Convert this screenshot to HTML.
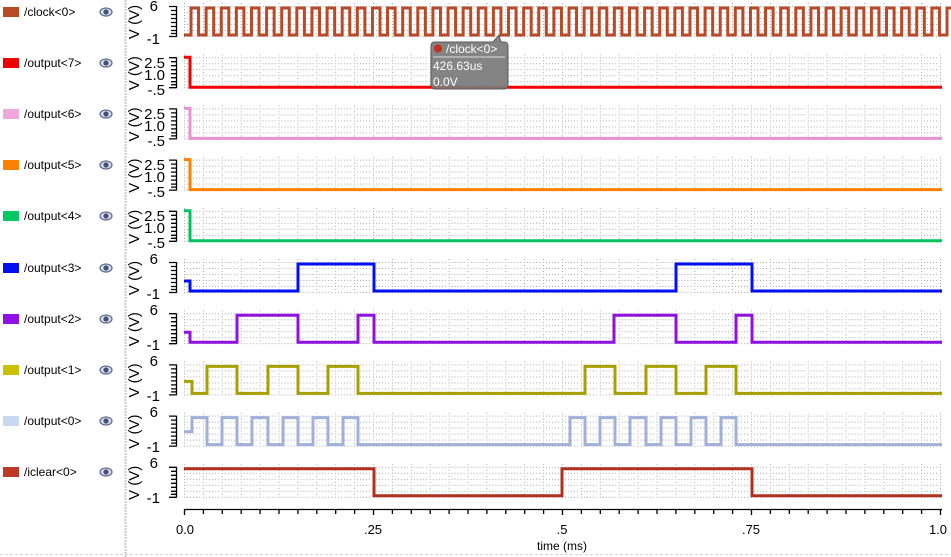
<!DOCTYPE html>
<html><head><meta charset="utf-8"><style>
html,body{margin:0;padding:0;background:#fff;width:951px;height:557px;overflow:hidden}
svg{display:block;font-family:"Liberation Sans",sans-serif}
</style></head><body>
<svg width="951" height="557" viewBox="0 0 951 557" xmlns="http://www.w3.org/2000/svg">
<defs>
<pattern id="gp" x="184" y="6" width="18.9" height="6" patternUnits="userSpaceOnUse">
<rect x="0" y="0" width="1" height="1" fill="#9aa89a"/><rect x="0" y="3" width="1" height="1" fill="#9aa89a"/>
<rect x="3" y="0" width="1" height="1" fill="#a8a8a8"/><rect x="6" y="0" width="1" height="1" fill="#a8a8a8"/>
<rect x="9" y="0" width="1" height="1" fill="#a8a8a8"/><rect x="12" y="0" width="1" height="1" fill="#a8a8a8"/>
<rect x="15" y="0" width="1" height="1" fill="#a8a8a8"/>
</pattern>
<g id="ax">
<rect x="184" y="3" width="758" height="35" fill="url(#gp)" stroke="none"/>
<path d="M176.5,6V37M169,6.5H176M169,36.5H176M171,10.5H176M171,14.5H176M171,18.5H176M171,22.5H176M171,26.5H176M171,30.5H176M171,33.5H176" stroke="#000" stroke-width="1.3" fill="none"/>
<text x="135" y="22" font-size="15" text-anchor="middle" transform="rotate(-90 135 22)" dominant-baseline="middle" fill="#000" stroke="none">V (V)</text>
</g>
<g id="eye"><ellipse cx="0" cy="0" rx="6" ry="4" fill="#d8dde8" stroke="#5a6a90" stroke-width="1.2"/><circle cx="0" cy="0" r="2.6" fill="#44507a"/></g>
</defs>
<line x1="125.5" y1="0" x2="125.5" y2="557" stroke="#c8c8c8" stroke-width="2" stroke-dasharray="2,1"/>
<line x1="0" y1="554.5" x2="951" y2="554.5" stroke="#e0d0e0" stroke-dasharray="3,2"/>

<g font-size="12" fill="#000">
<rect x="3" y="7" width="16" height="10" fill="#b84a28"/><text x="24" y="16">/clock&lt;0&gt;</text>
<rect x="3" y="58" width="16" height="10" fill="#f00000"/><text x="24" y="67">/output&lt;7&gt;</text>
<rect x="3" y="109" width="16" height="10" fill="#f0a8dc"/><text x="24" y="118">/output&lt;6&gt;</text>
<rect x="3" y="160" width="16" height="10" fill="#ff8000"/><text x="24" y="169">/output&lt;5&gt;</text>
<rect x="3" y="211" width="16" height="10" fill="#00c864"/><text x="24" y="220">/output&lt;4&gt;</text>
<rect x="3" y="263" width="16" height="10" fill="#0010f0"/><text x="24" y="272">/output&lt;3&gt;</text>
<rect x="3" y="314" width="16" height="10" fill="#9010e8"/><text x="24" y="323">/output&lt;2&gt;</text>
<rect x="3" y="365" width="16" height="10" fill="#c8c000"/><text x="24" y="374">/output&lt;1&gt;</text>
<rect x="3" y="416" width="16" height="10" fill="#c8d8f0"/><text x="24" y="425">/output&lt;0&gt;</text>
<rect x="3" y="467" width="16" height="10" fill="#c03828"/><text x="24" y="476">/iclear&lt;0&gt;</text>
</g>
<use href="#eye" x="106" y="12"/><use href="#eye" x="106" y="63"/><use href="#eye" x="106" y="114"/><use href="#eye" x="106" y="165"/><use href="#eye" x="106" y="216"/><use href="#eye" x="106" y="268"/><use href="#eye" x="106" y="319"/><use href="#eye" x="106" y="370"/><use href="#eye" x="106" y="421"/><use href="#eye" x="106" y="472"/>

<g fill="none" stroke-width="3">
<g transform="translate(0,0)"><use href="#ax"/>
<path stroke="#b84a28" d="M184,35H191V8h7.56v27h7.56v-27h7.56v27h7.56v-27h7.56v27h7.56v-27h7.56v27h7.56v-27h7.56v27h7.56v-27h7.56v27h7.56v-27h7.56v27h7.56v-27h7.56v27h7.56v-27h7.56v27h7.56v-27h7.56v27h7.56v-27h7.56v27h7.56v-27h7.56v27h7.56v-27h7.56v27h7.56v-27h7.56v27h7.56v-27h7.56v27h7.56v-27h7.56v27h7.56v-27h7.56v27h7.56v-27h7.56v27h7.56v-27h7.56v27h7.56v-27h7.56v27h7.56v-27h7.56v27h7.56v-27h7.56v27h7.56v-27h7.56v27h7.56v-27h7.56v27h7.56v-27h7.56v27h7.56v-27h7.56v27h7.56v-27h7.56v27h7.56v-27h7.56v27h7.56v-27h7.56v27h7.56v-27h7.56v27h7.56v-27h7.56v27h7.56v-27h7.56v27h7.56v-27h7.56v27h7.56v-27h7.56v27h7.56v-27h7.56v27h7.56v-27h7.56v27h7.56v-27h7.56v27h7.56v-27h7.56v27h7.56v-27h7.56v27h7.56v-27h7.56v27h7.56v-27h7.56v27h7.56v-27h7.56v27h7.56v-27h7.56v27h7.56v-27h7.56v27h7.56v-27h7.56v27h7.56v-27h7.56v27h7.56v-27h7.56v27h7.56v-27h7.56v27h7.56v-27h7.56v27h7.56v-27h7.56v27h7.56v-27h7.56v27h7.56v-27h7.56v27h7.56v-27h7.56v27h7.56v-27h7.56v27h7.56v-27h7.56v27h7.56v-27h7.56v27h7.56v-27h7.56v27h7.56v-27h7.56v27h7.56v-27h7.56v27h7.56v-27h7.56v27h7.56v-27h7.56v27h7.56v-27h7.56v27h7.56v-27h7.56v27h7.56v-27h7.56v27h7.56v-27h7.56v27h7.56v-27h7.56v27"/></g>
<g transform="translate(0,51.2)"><use href="#ax"/><path stroke="#f00000" d="M184,6H190V36H942"/></g>
<g transform="translate(0,102.4)"><use href="#ax"/><path stroke="#e890d0" d="M184,6H190V36H942"/></g>
<g transform="translate(0,153.6)"><use href="#ax"/><path stroke="#ff8000" d="M184,6H190V36H942"/></g>
<g transform="translate(0,204.8)"><use href="#ax"/><path stroke="#00c060" d="M184,6H190V36H942"/></g>
<g transform="translate(0,256)"><use href="#ax"/><path stroke="#0010f0" d="M184,25H190V35H298V8H374V35H676V8H752V35H942"/></g>
<g transform="translate(0,307.2)"><use href="#ax"/><path stroke="#9010e0" d="M184,25H190V35H237V8H298V35H358V8H374V35H614V8H676V35H736V8H752V35H942"/></g>
<g transform="translate(0,358.4)"><use href="#ax"/><path stroke="#a8a000" d="M184,23H192V35H207V8H237V35H268V8H298V35H328V8H358V35H585V8H615V35H646V8H676V35H706V8H736V35H942"/></g>
<g transform="translate(0,409.6)"><use href="#ax"/><path stroke="#a0b0d8" d="M184,22H192V8H207V35H222V8H237V35H252V8H268V35H283V8H298V35H313V8H328V35H343V8H358V35H570V8H585V35H600V8H615V35H630V8H646V35H661V8H676V35H691V8H706V35H721V8H736V35H942"/></g>
<g transform="translate(0,460.8)"><use href="#ax"/><path stroke="#b03020" d="M184,8H374V35H562V8H752V35H942"/></g>
</g>

<g font-size="15" fill="#000" text-anchor="end">
<text x="158" y="11">6</text><text x="160" y="44">-1</text>
<text x="165" y="68">2.5</text><text x="165" y="80">1.0</text><text x="165" y="95">-.5</text>
<text x="165" y="119">2.5</text><text x="165" y="131">1.0</text><text x="165" y="146">-.5</text>
<text x="165" y="170">2.5</text><text x="165" y="182">1.0</text><text x="165" y="197">-.5</text>
<text x="165" y="221">2.5</text><text x="165" y="233">1.0</text><text x="165" y="248">-.5</text>
<text x="158" y="264">6</text><text x="160" y="299">-1</text>
<text x="158" y="315">6</text><text x="160" y="350">-1</text>
<text x="158" y="366">6</text><text x="160" y="401">-1</text>
<text x="158" y="417">6</text><text x="160" y="452">-1</text>
<text x="158" y="468">6</text><text x="160" y="503">-1</text>
</g>

<path d="M184,509.5H942M184.5,509V515M203.4,509V514M222.3,509V514M241.2,509V514M260.1,509V514M279,509V514M297.9,509V514M316.8,509V514M335.7,509V514M354.6,509V514M373.5,509V515M392.4,509V514M411.3,509V514M430.2,509V514M449.1,509V514M468,509V514M486.9,509V514M505.8,509V514M524.7,509V514M543.6,509V514M562.5,509V515M581.4,509V514M600.3,509V514M619.2,509V514M638.1,509V514M657,509V514M675.9,509V514M694.8,509V514M713.7,509V514M732.6,509V514M751.5,509V515M770.4,509V514M789.3,509V514M808.2,509V514M827.1,509V514M846,509V514M864.9,509V514M883.8,509V514M902.7,509V514M921.6,509V514M940.5,509V515" stroke="#000" stroke-width="1.3" fill="none"/>
<g font-size="13" fill="#000" text-anchor="middle">
<text x="185" y="534">0.0</text><text x="373" y="534">.25</text><text x="562" y="534">.5</text><text x="751" y="534">.75</text><text x="938" y="534">1.0</text>
<text x="562" y="550" font-size="12">time (ms)</text>
</g>

<g>
<path d="M435,42H493L499,35L501,42H504Q508,42 508,46V85Q508,89 504,89H435Q431,89 431,85V46Q431,42 435,42Z" fill="#7a7a7a" fill-opacity="0.92" stroke="#5a5a5a"/>
<circle cx="438" cy="48.5" r="4" fill="#c03020"/>
<text x="446" y="53" font-size="12" fill="#fff">/clock&lt;0&gt;</text>
<line x1="433" y1="57" x2="505" y2="57" stroke="#ddd"/>
<text x="433" y="70" font-size="12" fill="#fff">426.63us</text>
<text x="433" y="86" font-size="12" fill="#fff">0.0V</text>
</g>
</svg>
</body></html>
